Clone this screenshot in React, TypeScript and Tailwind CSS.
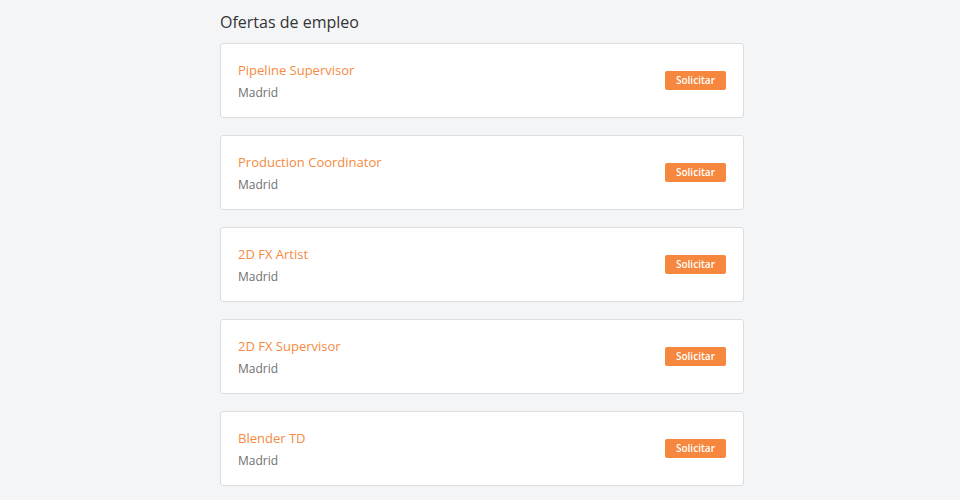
const jobs = [
  "Pipeline Supervisor",
  "Production Coordinator",
  "2D FX Artist",
  "2D FX Supervisor",
  "Blender TD",
];

export default function App() {
  return (
    <div
      className="min-h-[500px] w-full bg-[#f4f5f7]"
      style={{ fontFamily: '"Open Sans", "Liberation Sans", sans-serif' }}
    >
      <div className="mx-auto w-[528px] pl-1 pt-[10px]">
        <h2 className="mb-[9px] text-[16px] leading-6 text-[#333]">Ofertas de empleo</h2>
        <div className="flex flex-col gap-[17px]">
          {jobs.map((job) => (
            <div
              key={job}
              className="flex items-center justify-between rounded-[3px] border border-[#dcdde0] bg-white pl-[17px] pr-[17px] pt-4 pb-4"
            >
              <div className="flex flex-col gap-1">
                <span className="text-[13px] leading-5 text-[#f58a3f]">{job}</span>
                <span className="text-[12px] leading-[17px] text-[#707070]">Madrid</span>
              </div>
              <button
                type="button"
                className="flex h-[19px] w-[61px] items-center justify-center rounded-[2px] bg-[#f5873e] text-[10px] font-semibold text-white"
              >
                Solicitar
              </button>
            </div>
          ))}
        </div>
      </div>
    </div>
  );
}
